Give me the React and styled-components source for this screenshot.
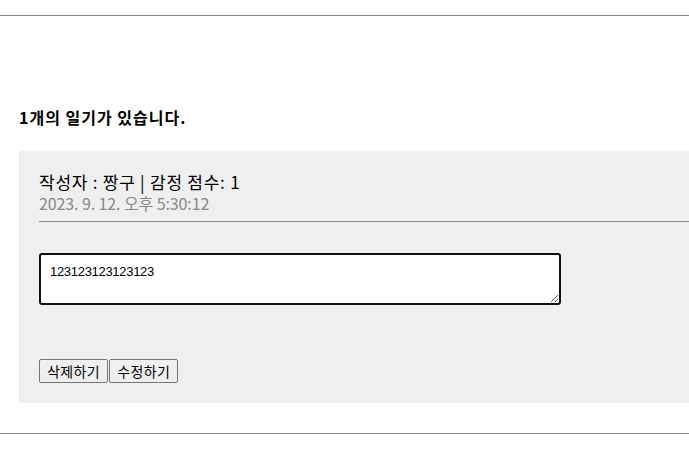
import React from "react";
import styled, { createGlobalStyle } from "styled-components";

const Global = createGlobalStyle`
  html, body { margin: 0; padding: 0; background: #fff; overflow: hidden; }
  body { font-family: "Noto Sans CJK KR", "Noto Sans", sans-serif; color: #000; }
`;

const Page = styled.div`
  width: 689px;
  height: 462px;
  overflow: hidden;
`;

const Rule = styled.hr`
  margin: ${(p) => p.$top || 0}px 0 0;
  border: 0;
  border-top: 1px solid #8a8a8a;
  height: 0;
`;

const ListSection = styled.section`
  padding: 89px 0 0 19px;
`;

const Title = styled.h4`
  margin: 0 0 22px;
  font-size: 16px;
  line-height: 24px;
  font-weight: 700;
  letter-spacing: 1px;
`;

const DiaryCard = styled.div`
  background: #efefef;
  padding: 19px 0 20px 20px;
  margin-right: -40px;
`;

const Info = styled.div`
  font-size: 17px;
  line-height: 23px;
  letter-spacing: 0.75px;
`;

const DateText = styled.div`
  color: #888;
  font-size: 16px;
  line-height: 20px;
  letter-spacing: -0.1px;
`;

const CardRule = styled.hr`
  margin: 8px 0 0;
  border: 0;
  border-top: 1px solid #8a8a8a;
  height: 0;
`;

const EditArea = styled.textarea`
  display: block;
  margin-top: 31px;
  box-sizing: border-box;
  width: 522px;
  height: 52px;
  padding: 9px 9px;
  border: 2px solid #111;
  border-radius: 3px;
  background: #fff;
  font-family: "Liberation Sans", "Noto Sans CJK KR", sans-serif;
  font-size: 13px;
  line-height: 16px;
  letter-spacing: -0.3px;
  color: #000;
  outline: none;
`;

const Actions = styled.div`
  display: flex;
  gap: 1px;
  margin-top: 54px;
`;

const Button = styled.button`
  box-sizing: border-box;
  height: 24px;
  padding: 0 7px;
  border: 1px solid #767676;
  border-radius: 2px;
  background: #efefef;
  font-family: "Noto Sans CJK KR", sans-serif;
  font-size: 14px;
  line-height: 20px;
  letter-spacing: 0.4px;
  color: #000;
`;

export default function App() {
  return (
    <Page>
      <Global />
      <Rule $top={15} />
      <ListSection>
        <Title>1개의 일기가 있습니다.</Title>
        <DiaryCard>
          <Info>작성자 : 짱구 | 감정 점수: 1</Info>
          <DateText>2023. 9. 12. 오후 5:30:12</DateText>
          <CardRule />
          <EditArea defaultValue="123123123123123" />
          <Actions>
            <Button>삭제하기</Button>
            <Button>수정하기</Button>
          </Actions>
        </DiaryCard>
      </ListSection>
      <Rule $top={30} />
    </Page>
  );
}
